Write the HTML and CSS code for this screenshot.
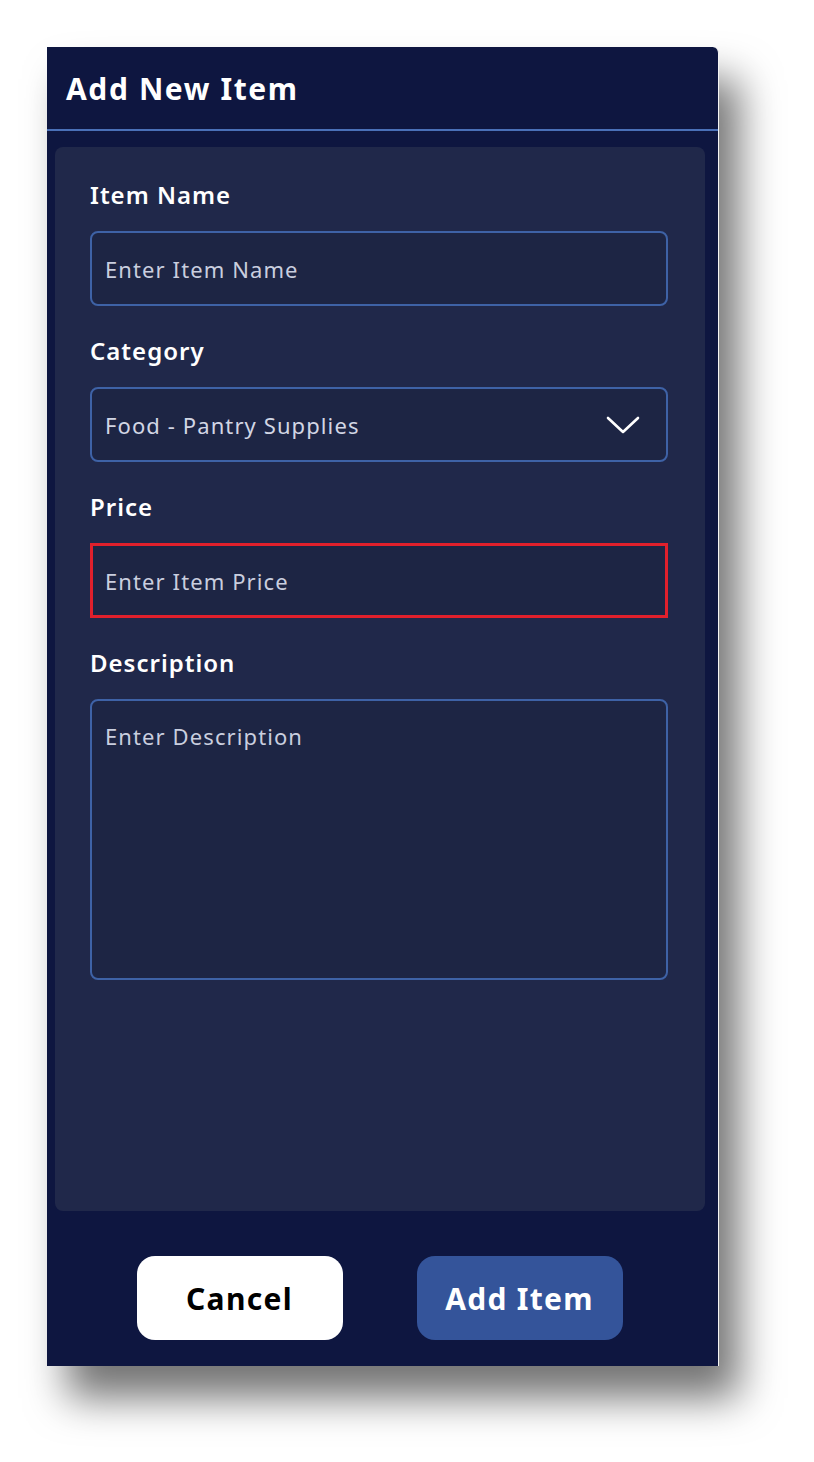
FILE: index.html
```html
<!DOCTYPE html>
<html lang="en">
<head>
  <meta charset="UTF-8" />
  <meta name="viewport" content="width=device-width, initial-scale=1.0" />
  <title>Add New Item</title>
  <link rel="stylesheet" href="styles.css">
</head>
<body>
  <div class="dialog">
    <h1 class="dialog-title">Add New Item</h1>
    <form class="card" id="item-form">
      <label class="field-label" for="name">Item Name</label>
      <input class="field" id="name" type="text" placeholder="Enter Item Name" />

      <label class="field-label" for="category">Category</label>
      <div class="field select">
        <span>Food - Pantry Supplies</span>
        <svg class="chevron" width="34" height="20" viewBox="0 0 34 20">
          <polyline points="2,3 17,17 32,3" fill="none" stroke="#fff" stroke-width="2.6" stroke-linecap="round" stroke-linejoin="round" />
        </svg>
      </div>

      <label class="field-label" for="price">Price</label>
      <input class="field field-error" id="price" type="text" placeholder="Enter Item Price" />

      <label class="field-label" for="desc">Description</label>
      <textarea class="field area" id="desc" placeholder="Enter Description"></textarea>
    </form>
    <div class="actions">
      <button type="button" class="btn btn-cancel">Cancel</button>
      <button type="submit" form="item-form" class="btn btn-add">Add Item</button>
    </div>
  </div>
</body>
</html>
```

FILE: styles.css
```css
body {
  margin: 0;
  padding: 47px 0 96px 47px;
  background: #ffffff;
  font-family: "Noto Sans", "Open Sans", sans-serif;
}
.dialog {
  width: 671px;
  height: 1319px;
  background: #0e1640;
  border-top-right-radius: 6px;
  border-right: 1px solid #f4f4f4;
  box-shadow: 20px 32px 40px rgba(0, 0, 0, 0.55);
  display: flex;
  flex-direction: column;
}
.dialog-title {
  margin: 0;
  height: 82px;
  padding-left: 19px;
  display: flex;
  align-items: center;
  color: #ffffff;
  font-size: 30px;
  font-weight: 700;
  letter-spacing: 1.6px;
  border-bottom: 2px solid #4a70b8;
}
.card {
  margin: 16px 13px 0 8px;
  height: 1064px;
  box-sizing: border-box;
  padding: 33px 36px 0 35px;
  background: #20284a;
  border-radius: 8px;
  display: flex;
  flex-direction: column;
}
.field-label {
  color: #ffffff;
  font-size: 24px;
  font-weight: 600;
  line-height: 30px;
  margin-bottom: 21px;
  letter-spacing: 1px;
}
.field {
  box-sizing: border-box;
  width: 578px;
  height: 75px;
  margin: 0 0 30px;
  padding: 0 13px;
  background: #1d2544;
  border: 2px solid #3e62a6;
  border-radius: 8px;
  color: #d0d4e2;
  font-family: inherit;
  font-size: 22px;
  letter-spacing: 1.1px;
  outline: none;
}
.field::placeholder {
  color: #c9cedf;
  opacity: 1;
}
.select {
  display: flex;
  align-items: center;
  justify-content: space-between;
  padding-right: 26px;
  color: #d2d6e4;
}
.field-error {
  border: 3px solid #e0202c;
  border-radius: 0;
  padding-left: 12px;
}
.area {
  height: 281px;
  padding-top: 20px;
  resize: none;
  line-height: 30px;
}
.actions {
  flex: 1;
  display: flex;
  justify-content: center;
  align-items: flex-start;
  gap: 74px;
  padding: 45px 6px 0 0;
}
.btn {
  width: 206px;
  height: 84px;
  border: none;
  border-radius: 18px;
  font-family: inherit;
  font-size: 30px;
  font-weight: 700;
  letter-spacing: 1.3px;
  cursor: pointer;
}
.btn-cancel {
  background: #ffffff;
  color: #000000;
}
.btn-add {
  background: #34549a;
  color: #ffffff;
}
```
